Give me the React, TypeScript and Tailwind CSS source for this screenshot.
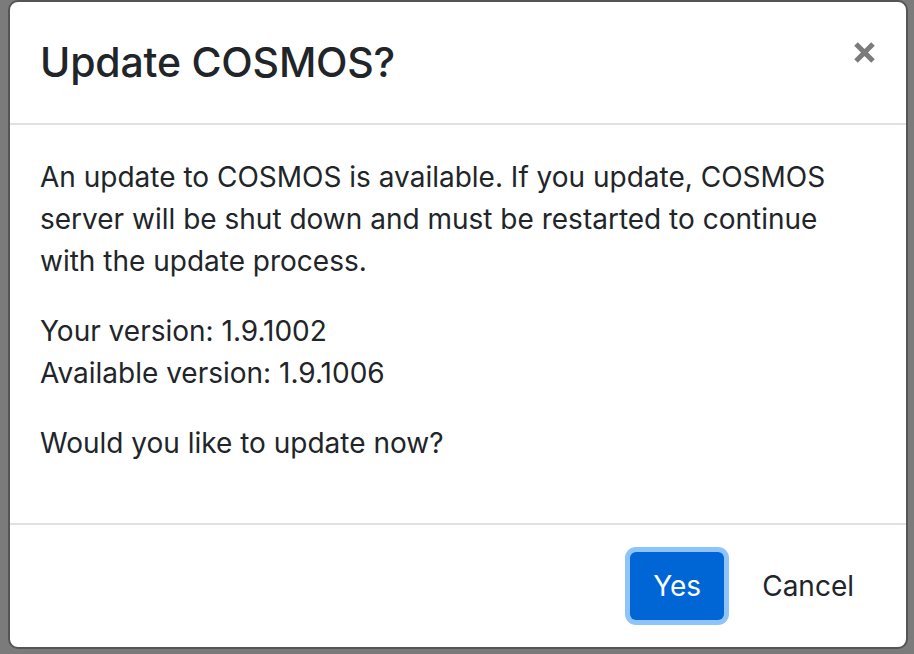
import * as React from 'react';

const font = { fontFamily: 'Inter, "Liberation Sans", Arial, sans-serif' };

function CloseIcon() {
  return (
    <svg width="23" height="23" viewBox="0 0 23 23" aria-hidden="true">
      <path d="M3 3 L20 20 M20 3 L3 20" stroke="#7b7b7b" strokeWidth="5" strokeLinecap="butt" fill="none" />
    </svg>
  );
}

export default function App() {
  return (
    <div className="h-[654px] w-[914px] overflow-hidden bg-[#7b7b7b] pl-[8px]" style={font}>
      <div className="flex h-[649px] w-[900px] flex-col overflow-hidden rounded-[10px] border-2 border-[#555555] bg-white text-[#212529]">
        <header className="box-border flex h-[123px] shrink-0 items-center justify-between border-b-2 border-[#dee2e6] px-[30px]">
          <h4 className="text-[41px] font-medium leading-[1.5] tracking-[-0.2px]">Update COSMOS?</h4>
          <button className="mb-[20px] flex h-[23px] w-[23px] items-center justify-center" aria-label="Close">
            <CloseIcon />
          </button>
        </header>

        <main className="flex-1 px-[30px] pt-[31px] text-[28px] leading-[42px]">
          <p className="mb-[28px]">
            An update to COSMOS is available. If you update, COSMOS server will be shut down and must be
            restarted to continue with the update process.
          </p>
          <p className="mb-[28px]">
            Your version: 1.9.1002
            <br />
            Available version: 1.9.1006
          </p>
          <p>Would you like to update now?</p>
        </main>

        <footer className="box-border flex h-[124px] shrink-0 items-center justify-end gap-[15px] border-t-2 border-[#dee2e6] pr-[29px]">
          <button className="h-[68px] w-[94px] rounded-[6px] bg-[#0066d6] text-[28px] leading-[42px] text-white ring-[5px] ring-[#8ec3fc]">
            Yes
          </button>
          <button className="h-[68px] px-[23px] text-[28px] leading-[42px] text-[#212529]">Cancel</button>
        </footer>
      </div>
    </div>
  );
}
